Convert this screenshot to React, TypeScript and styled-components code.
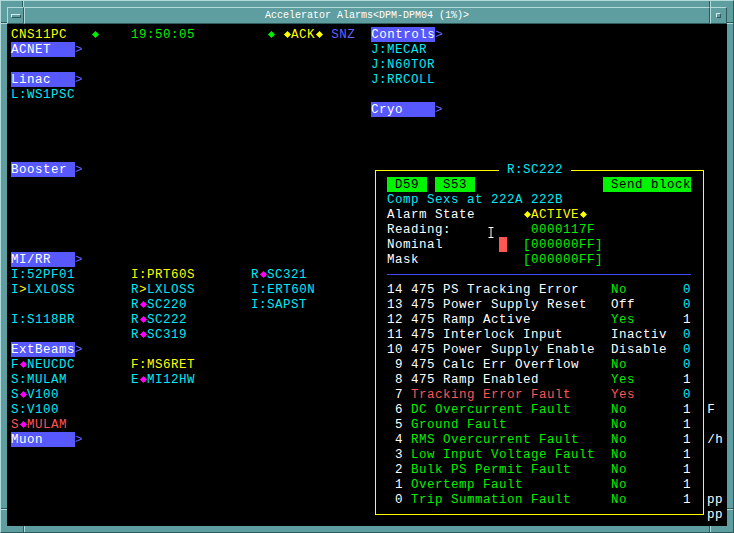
import React from "react";
import styled, { createGlobalStyle } from "styled-components";

const GlobalStyle = createGlobalStyle`
  html, body {
    margin: 0;
    padding: 0;
    background: #000;
  }
  body {
    width: 734px;
    height: 533px;
    overflow: hidden;
    font-family: "Liberation Mono", "DejaVu Sans Mono", monospace;
  }
`;

const W = "#ffffff";
const Y = "#ffff00";
const G = "#00ee00";
const C = "#00e8f4";
const B = "#6262ff";
const M = "#ff00ff";
const R = "#ff5555";
const K = "#000000";
const BOX = "#5858ff";
const BTN = "#00f400";

const LIGHT = "#b2dada";
const DARK = "#2d5b5c";

type Seg = { col: number; text: string; color: string; bg?: string; dia?: string };

// main screen, one entry per 15px text row
const screen: Record<number, Seg[]> = {
  0: [
    { col: 0, text: "CNS11PC", color: Y },
    { col: 10, text: "◆", color: G },
    { col: 15, text: "19:50:05", color: G },
    { col: 32, text: "◆", color: G },
    { col: 34, text: "◆ACK◆", color: Y },
    { col: 40, text: "SNZ", color: B },
    { col: 45, text: "Controls", color: W, bg: BOX },
    { col: 53, text: ">", color: B },
  ],
  1: [
    { col: 0, text: "ACNET   ", color: W, bg: BOX },
    { col: 8, text: ">", color: B },
    { col: 45, text: "J:MECAR", color: C },
  ],
  2: [{ col: 45, text: "J:N60TOR", color: C }],
  3: [
    { col: 0, text: "Linac   ", color: W, bg: BOX },
    { col: 8, text: ">", color: B },
    { col: 45, text: "J:RRCOLL", color: C },
  ],
  4: [{ col: 0, text: "L:WS1PSC", color: C }],
  5: [
    { col: 45, text: "Cryo    ", color: W, bg: BOX },
    { col: 53, text: ">", color: B },
  ],
  9: [
    { col: 0, text: "Booster ", color: W, bg: BOX },
    { col: 8, text: ">", color: B },
  ],
  15: [
    { col: 0, text: "MI/RR   ", color: W, bg: BOX },
    { col: 8, text: ">", color: B },
  ],
  16: [
    { col: 0, text: "I:52PF01", color: C },
    { col: 15, text: "I:PRT60S", color: Y },
    { col: 30, text: "R◆SC321", color: C, dia: M },
  ],
  17: [
    { col: 0, text: "I", color: C },
    { col: 1, text: ">", color: Y },
    { col: 2, text: "LXLOSS", color: C },
    { col: 15, text: "R", color: C },
    { col: 16, text: ">", color: Y },
    { col: 17, text: "LXLOSS", color: C },
    { col: 30, text: "I:ERT60N", color: C },
  ],
  18: [
    { col: 15, text: "R◆SC220", color: C, dia: M },
    { col: 30, text: "I:SAPST", color: C },
  ],
  19: [
    { col: 0, text: "I:S118BR", color: C },
    { col: 15, text: "R◆SC222", color: C, dia: M },
  ],
  20: [{ col: 15, text: "R◆SC319", color: C, dia: M }],
  21: [
    { col: 0, text: "ExtBeams", color: W, bg: BOX },
    { col: 8, text: ">", color: B },
  ],
  22: [
    { col: 0, text: "F◆NEUCDC", color: C, dia: M },
    { col: 15, text: "F:MS6RET", color: Y },
  ],
  23: [
    { col: 0, text: "S:MULAM", color: C },
    { col: 15, text: "E◆MI12HW", color: C, dia: M },
  ],
  24: [{ col: 0, text: "S◆V100", color: C, dia: M }],
  25: [
    { col: 0, text: "S:V100", color: C },
    { col: 87, text: "F", color: W },
  ],
  26: [{ col: 0, text: "S◆MULAM", color: R, dia: M }],
  27: [
    { col: 0, text: "Muon    ", color: W, bg: BOX },
    { col: 8, text: ">", color: B },
    { col: 87, text: "/h", color: W },
  ],
  31: [{ col: 87, text: "pp", color: W }],
  32: [{ col: 87, text: "pp", color: W }],
};

const header: Seg[][] = [
  [
    { col: 0, text: " D59 ", color: K, bg: BTN },
    { col: 6, text: " S53 ", color: K, bg: BTN },
    { col: 27, text: " Send block", color: K, bg: BTN },
  ],
  [{ col: 0, text: "Comp Sexs at 222A 222B", color: C }],
  [
    { col: 0, text: "Alarm State", color: W },
    { col: 17, text: "◆ACTIVE◆", color: Y },
  ],
  [
    { col: 0, text: "Reading:", color: W },
    { col: 18, text: "0000117F", color: G },
  ],
  [
    { col: 0, text: "Nominal", color: W },
    { col: 14, text: " ", color: W, bg: R },
    { col: 17, text: "[000000FF]", color: G },
  ],
  [
    { col: 0, text: "Mask", color: W },
    { col: 17, text: "[000000FF]", color: G },
  ],
];

const bits: [number, string, string, string, string, string][] = [
  [14, "475 PS Tracking Error", W, "No", G, "0"],
  [13, "475 Power Supply Reset", W, "Off", W, "0"],
  [12, "475 Ramp Active", W, "Yes", G, "1"],
  [11, "475 Interlock Input", W, "Inactiv", W, "0"],
  [10, "475 Power Supply Enable", W, "Disable", W, "0"],
  [9, "475 Calc Err Overflow", W, "No", G, "0"],
  [8, "475 Ramp Enabled", W, "Yes", G, "1"],
  [7, "Tracking Error Fault", R, "Yes", R, "0"],
  [6, "DC Overcurrent Fault", G, "No", G, "1"],
  [5, "Ground Fault", G, "No", G, "1"],
  [4, "RMS Overcurrent Fault", G, "No", G, "1"],
  [3, "Low Input Voltage Fault", G, "No", G, "1"],
  [2, "Bulk PS Permit Fault", G, "No", G, "1"],
  [1, "Overtemp Fault", G, "No", G, "1"],
  [0, "Trip Summation Fault", G, "No", G, "1"],
];

const TextLine = ({ segs = [] }: { segs?: Seg[] }) => {
  let pos = 0;
  return (
    <Row>
      {segs.map((s, i) => {
        const gap = s.col > pos ? " ".repeat(s.col - pos) : "";
        pos = s.col + s.text.length;
        const parts = s.text.split("◆");
        return (
          <React.Fragment key={i}>
            {gap}
            <Cell $color={s.color} $bg={s.bg}>
              {parts.map((p, j) => (
                <React.Fragment key={j}>
                  {j > 0 && <Diamond $color={s.dia ?? s.color} />}
                  {p}
                </React.Fragment>
              ))}
            </Cell>
          </React.Fragment>
        );
      })}
    </Row>
  );
};

const App = () => {
  return (
    <>
      <GlobalStyle />
      <Window>
        <TitleBar>
          <TitleButton>
            <MinIcon />
          </TitleButton>
          <TitleLabel>Accelerator Alarms&lt;DPM-DPM04 (1%)&gt;</TitleLabel>
          <TitleButton>
            <MaxIcon />
          </TitleButton>
        </TitleBar>

        <Screen>
          {Array.from({ length: 33 }, (_, r) => (
            <TextLine key={r} segs={screen[r]} />
          ))}

          <Dialog>
            <DialogTitle> R:SC222 </DialogTitle>
            {header.map((segs, i) => (
              <TextLine key={i} segs={segs} />
            ))}
            <RuleRow>
              <Rule />
            </RuleRow>
            {bits.map(([n, desc, dc, val, vc, bit]) => (
              <TextLine
                key={n}
                segs={[
                  { col: 0, text: String(n).padStart(2, " "), color: W },
                  { col: 3, text: desc, color: dc },
                  { col: 28, text: val, color: vc },
                  { col: 37, text: bit, color: bit === "0" ? C : W },
                ]}
              />
            ))}
          </Dialog>

          <IBeam width="8" height="13" viewBox="0 0 8 13">
            <path d="M1 1.5h6M4 1.5v10M1 11.5h6" stroke="#000" strokeWidth="3" fill="none" />
            <path d="M1.5 1.5h5M4 1.5v10M1.5 11.5h5" stroke="#fff" strokeWidth="1" fill="none" />
          </IBeam>
        </Screen>
      </Window>
    </>
  );
};

/* resize-handle notches in the frame, drawn as background lines */
const vNotch = `linear-gradient(to right, ${DARK} 1px, ${LIGHT} 1px)`;
const hNotch = `linear-gradient(to bottom, ${DARK} 1px, ${LIGHT} 1px)`;

const Window = styled.div`
  box-sizing: border-box;
  width: 734px;
  height: 533px;
  display: flex;
  flex-direction: column;
  padding: 6px;
  background-color: #5f9ea0;
  background-image: ${vNotch}, ${vNotch}, ${vNotch}, ${vNotch}, ${hNotch},
    ${hNotch}, ${hNotch}, ${hNotch};
  background-repeat: no-repeat;
  background-origin: border-box;
  background-size: 2px 7px, 2px 7px, 2px 7px, 2px 7px, 7px 2px, 7px 2px,
    7px 2px, 7px 2px;
  background-position: 22px 0, 709px 0, 23px 526px, 709px 526px, 0 22px,
    727px 22px, 0 508px, 727px 508px;
  border-top: 1px solid ${LIGHT};
  border-left: 1px solid ${LIGHT};
  border-right: 1px solid ${DARK};
  border-bottom: 1px solid ${DARK};
`;

const TitleBar = styled.div`
  display: flex;
  height: 17px;
`;

const Bevel = styled.div`
  box-sizing: border-box;
  display: flex;
  align-items: center;
  justify-content: center;
  border-top: 1px solid ${LIGHT};
  border-left: 1px solid ${LIGHT};
  border-right: 1px solid ${DARK};
  border-bottom: 1px solid ${DARK};
`;

const TitleButton = styled(Bevel)`
  width: 17px;
`;

const TitleLabel = styled(Bevel)`
  flex: 1;
  color: #ffffff;
  font-size: 10px;
  line-height: 15px;
  white-space: pre;
`;

const MinIcon = styled.span`
  box-sizing: border-box;
  width: 10px;
  height: 4px;
  border-top: 1px solid #d0ecec;
  border-left: 1px solid #d0ecec;
  border-right: 1px solid ${DARK};
  border-bottom: 1px solid ${DARK};
`;

const MaxIcon = styled(MinIcon)`
  width: 5px;
  height: 5px;
`;

const Screen = styled.div`
  position: relative;
  flex: 1;
  overflow: hidden;
  box-sizing: border-box;
  padding: 3px 0 0 4px;
  background: #000;
`;

const Row = styled.div`
  height: 15px;
  line-height: 15px;
  font-size: 12.5px;
  letter-spacing: 0.5px;
  white-space: pre;
  color: #fff;
`;

const Cell = styled.span<{ $color: string; $bg?: string }>`
  display: inline-block;
  height: 15px;
  vertical-align: top;
  padding-top: 1px;
  box-sizing: border-box;
  color: ${(p) => p.$color};
  background: ${(p) => p.$bg ?? "transparent"};
`;

const Diamond = styled.span<{ $color: string }>`
  position: relative;
  display: inline-block;
  width: 8px;
  height: 14px;
  vertical-align: top;

  &::after {
    content: "";
    position: absolute;
    left: 1.5px;
    top: 4px;
    width: 5px;
    height: 5px;
    background: ${(p) => p.$color};
    transform: rotate(45deg);
  }
`;

/* popup detail window laid over the alarm screen */
const Dialog = styled.div`
  position: absolute;
  left: 368px;
  top: 146px;
  width: 329px;
  height: 345px;
  box-sizing: border-box;
  padding: 6px 0 0 11px;
  border: 1px solid #ffff00;
  background: #000;
`;

const DialogTitle = styled.div`
  position: absolute;
  left: 123px;
  top: -9px;
  height: 15px;
  padding-top: 1px;
  box-sizing: border-box;
  line-height: 15px;
  font-size: 12.5px;
  letter-spacing: 0.5px;
  white-space: pre;
  color: ${C};
  background: #000;
`;

const RuleRow = styled.div`
  height: 15px;
  display: flex;
  align-items: center;
`;

const Rule = styled.div`
  width: 304px;
  height: 1px;
  background: #4646ff;
`;

const IBeam = styled.svg`
  position: absolute;
  left: 480px;
  top: 202px;
`;

export default App;
